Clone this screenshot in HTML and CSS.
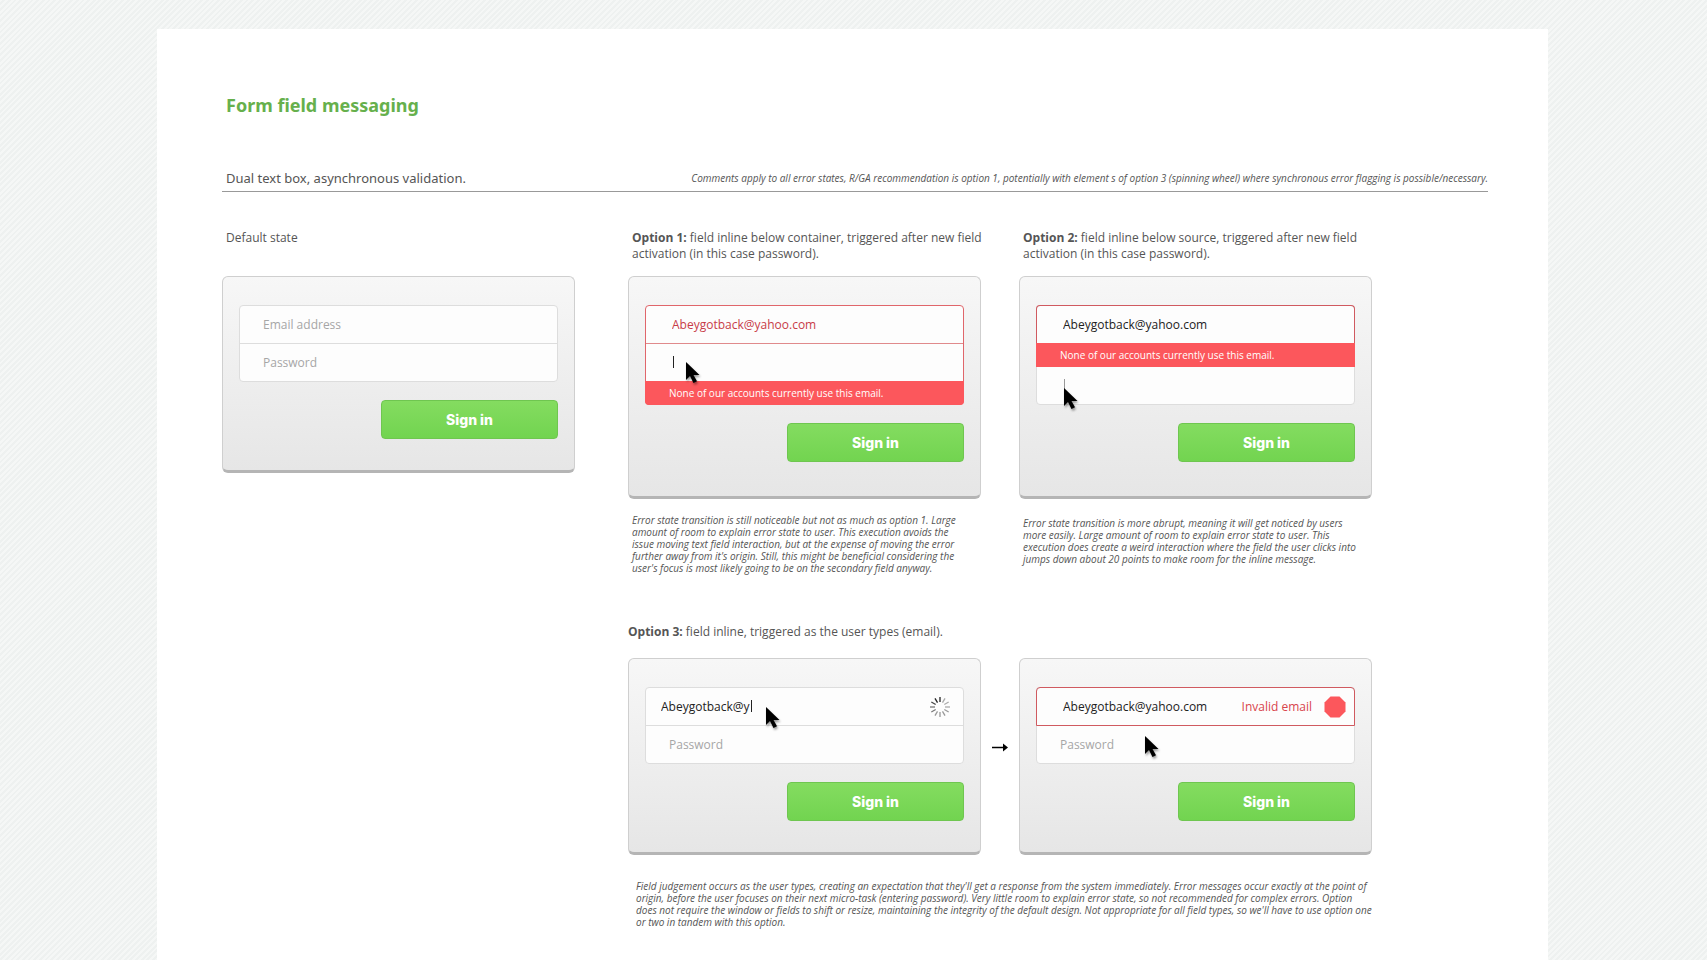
FILE: index.html
```html
<!DOCTYPE html>
<html lang="en">
<head>
<meta charset="utf-8">
<title>Form field messaging</title>
<link rel="stylesheet" href="styles.css">
</head>
<body>
<svg class="defs" aria-hidden="true">
  <symbol id="pointer" viewBox="0 0 18 24">
    <path d="M1 1v18l4-4 3.500 7 3.500-1.700-3.500-6.300h6z" fill="#000"/>
  </symbol>
</svg>
<main class="sheet">
  <h1 class="title">Form field messaging</h1>
  <header class="intro">
    <h2 class="subtitle">Dual text box, asynchronous validation.</h2>
    <p class="comment">Comments apply to all error states, R/GA recommendation is option 1, potentially with element s of option 3 (spinning wheel) where synchronous error flagging is possible/necessary.</p>
  </header>

  <div class="board">
    <p class="caption col-a">Default state</p>
    <p class="caption col-b"><strong>Option 1:</strong> field inline below container, triggered after new field<br>activation (in this case password).</p>
    <p class="caption col-c"><strong>Option 2:</strong> field inline below source, triggered after new field<br>activation (in this case password).</p>

    <form class="card col-a">
      <div class="fields">
        <div class="row"><input type="email" aria-label="Email address" placeholder="Email address"></div>
        <div class="row"><input type="password" aria-label="Password" placeholder="Password"></div>
      </div>
      <button class="submit" type="button">Sign in</button>
    </form>

    <form class="card card-tall col-b">
      <div class="fields fields-error">
        <div class="row row-entered"><input class="text-error" type="email" aria-label="Email address" value="Abeygotback@yahoo.com"></div>
        <div class="row"><input type="password" aria-label="Password"><span class="caret"></span></div>
        <p class="message">None of our accounts currently use this email.</p>
      </div>
      <button class="submit" type="button">Sign in</button>
      <svg class="pointer pointer-one" aria-hidden="true"><use href="#pointer"/></svg>
    </form>

    <form class="card card-tall col-c">
      <div class="fields">
        <div class="row row-entered row-invalid"><input type="email" aria-label="Email address" value="Abeygotback@yahoo.com"></div>
        <p class="message message-inline">None of our accounts currently use this email.</p>
        <div class="row"><input type="password" aria-label="Password"><span class="caret caret-faint"></span></div>
      </div>
      <button class="submit" type="button">Sign in</button>
      <svg class="pointer pointer-two" aria-hidden="true"><use href="#pointer"/></svg>
    </form>

    <p class="note col-b">Error state transition is still noticeable but not as much as option 1. Large<br>amount of room to explain error state to user. This execution avoids the<br>issue moving text field interaction, but at the expense of moving the error<br>further away from it's origin. Still, this might be beneficial considering the<br>user's focus is most likely going to be on the secondary field anyway.</p>
    <p class="note note-lower col-c">Error state transition is more abrupt, meaning it will get noticed by users<br>more easily. Large amount of room to explain error state to user. This<br>execution does create a weird interaction where the field the user clicks into<br>jumps down about 20 points to make room for the inline message.</p>

    <p class="caption caption-wide"><strong>Option 3:</strong> field inline, triggered as the user types (email).</p>

    <form class="card col-b">
      <div class="fields">
        <div class="row row-typing">
          <input type="email" aria-label="Email address" value="Abeygotback@y"><span class="caret caret-typing"></span>
          <svg class="spinner" viewBox="-10 -10 20 20" role="img" aria-label="Checking" stroke-width="1.300">
            <g stroke="#222"><path d="M0-5v-5"/><path d="M0-5v-5" transform="rotate(-30)"/></g>
            <g stroke="#444"><path d="M0-5v-5" transform="rotate(-60)"/></g>
            <g stroke="#777"><path d="M0-5v-5" transform="rotate(-90)"/><path d="M0-5v-5" transform="rotate(-120)"/></g>
            <g stroke="#999"><path d="M0-5v-5" transform="rotate(-150)"/><path d="M0-5v-5" transform="rotate(180)"/><path d="M0-5v-5" transform="rotate(150)"/><path d="M0-5v-5" transform="rotate(120)"/></g>
            <g stroke="#aaa"><path d="M0-5v-5" transform="rotate(90)"/><path d="M0-5v-5" transform="rotate(60)"/><path d="M0-5v-5" transform="rotate(30)"/></g>
          </svg>
        </div>
        <div class="row"><input type="password" aria-label="Password" placeholder="Password"></div>
      </div>
      <button class="submit" type="button">Sign in</button>
      <svg class="pointer pointer-three" aria-hidden="true"><use href="#pointer"/></svg>
    </form>

    <svg class="arrow" viewBox="0 0 16 9" role="img" aria-label="then"><path d="M0 4.500h12" stroke="#000" stroke-width="1.500"/><path d="M11 0.500l5 4-5 4z"/></svg>

    <form class="card col-c">
      <div class="fields">
        <div class="row row-entered row-outlined">
          <input type="email" aria-label="Email address" value="Abeygotback@yahoo.com">
          <span class="flag">Invalid email</span>
          <svg class="stop" viewBox="0 0 22 22" aria-hidden="true"><path d="M6.500 0.500h9l6 6v9l-6 6h-9l-6-6v-9z" fill="#fc575c"/></svg>
        </div>
        <div class="row"><input type="password" aria-label="Password" placeholder="Password"></div>
      </div>
      <button class="submit" type="button">Sign in</button>
      <svg class="pointer pointer-four" aria-hidden="true"><use href="#pointer"/></svg>
    </form>

    <p class="note note-wide">Field judgement occurs as the user types, creating an expectation that they'll get a response from the system immediately. Error messages occur exactly at the point of<br>origin, before the user focuses on their next micro-task (entering password). Very little room to explain error state, so not recommended for complex errors. Option<br>does not require the window or fields to shift or resize, maintaining the integrity of the default design. Not appropriate for all field types, so we'll have to use option one<br>or two in tandem with this option.</p>
  </div>
</main>
</body>
</html>
```

FILE: styles.css
```css
* { box-sizing: border-box; }

body {
  margin: 0;
  min-height: 100vh;
  display: flex;
  padding: 29px 159px 0 157px;
  font-family: "Open Sans", "Noto Sans", sans-serif;
  font-size: 12px;
  color: #555;
  background: #f1f4f3 repeating-linear-gradient(135deg, #f5f7f6 0 2px, #eef1f0 2px 4px);
}

h1, h2, p { margin: 0; }

.defs { position: absolute; width: 0; height: 0; }

.sheet {
  flex: 1;
  min-width: 0;
  padding: 63px 60px 31px 65px;
  background: #fff;
}

.title {
  padding-left: 4px;
  font-family: "Noto Sans", sans-serif;
  font-size: 18px;
  line-height: 26px;
  color: #66b04c;
}

.intro {
  display: flex;
  align-items: center;
  justify-content: space-between;
  margin-top: 47px;
  padding-left: 4px;
  height: 27px;
  border-bottom: 1px solid #999;
  white-space: nowrap;
}

.subtitle {
  font-family: "Noto Sans", sans-serif;
  font-size: 13px;
  font-weight: 400;
  line-height: 20px;
}

.comment {
  font-size: 10px;
  font-style: italic;
  line-height: 12px;
}

.board {
  display: grid;
  grid-template-columns: minmax(0, 353fr) minmax(0, 53fr) minmax(0, 353fr) minmax(0, 38fr) minmax(0, 353fr) minmax(0, 116fr);
  margin-top: 38px;
  align-items: start;
}

.col-a { grid-column: 1; }
.col-b { grid-column: 3; }
.col-c { grid-column: 5; }

.caption {
  padding-left: 4px;
  margin-bottom: 14px;
  line-height: 16px;
  white-space: nowrap;
}

.caption-wide {
  grid-column: 3 / 6;
  margin: 50px 0 18px;
  padding-left: 0;
}

.card {
  position: relative;
  display: flex;
  flex-direction: column;
  padding: 28px 16px 31px;
  border: 1px solid #cfcfcf;
  border-bottom: 3px solid #b5b5b5;
  border-radius: 6px;
  background: linear-gradient(#f7f7f7, #e6e6e6);
}

.card-tall { padding-bottom: 34px; }

.fields {
  border: 1px solid #ddd;
  border-radius: 4px;
  background: #fdfdfd;
}

.row {
  position: relative;
  display: flex;
  align-items: center;
  height: 37px;
  padding: 0 8px 0 23px;
}

.row + .row { border-top: 1px solid #ddd; height: 38px; }
.row-entered { padding-left: 26px; }
.row-typing { padding: 0 13px 0 15px; }

input {
  flex: 1;
  min-width: 0;
  padding: 0;
  border: 0;
  outline: 0;
  background: none;
  font: inherit;
  line-height: 18px;
  color: #222;
}

input::placeholder { color: #a6a6a6; opacity: 1; }

.text-error { color: #c83c48; }

.fields-error { border-color: #e0666b; }
.fields-error .row + .row { border-color: #e08a8c; }

.message {
  margin: 0 -1px -1px;
  padding-left: 24px;
  border-radius: 0 0 4px 4px;
  background: #fc575c;
  font-size: 10px;
  font-weight: 500;
  line-height: 24px;
  color: #fff;
}

.message-inline {
  margin-bottom: 0;
  border-radius: 0;
}

.row-invalid, .row-outlined {
  margin: -1px -1px 0;
  padding-left: 26px;
  border: 1px solid #d05a60;
  border-radius: 4px 4px 0 0;
  height: 38px;
}

.row-invalid { border-bottom: 0; }
.row-outlined { height: 39px; }
.row-outlined + .row { border-top: 0; height: 37px; }

.flag { margin-right: 12px; color: #d8444c; }
.stop { width: 22px; height: 22px; }
.spinner { width: 20px; height: 20px; }

.caret {
  position: absolute;
  left: 27px;
  top: 12px;
  width: 1px;
  height: 12px;
  background: #222;
}

.caret-faint { background: #999; }
.caret-typing { left: 105px; }

.submit {
  align-self: flex-end;
  width: 177px;
  height: 39px;
  margin-top: 18px;
  border: 1px solid #6fc650;
  border-radius: 4px;
  background: linear-gradient(#84dc60, #72d450);
  font-family: Inter, sans-serif;
  font-size: 14px;
  font-weight: 800;
  color: #fff;
}

.pointer {
  position: absolute;
  width: 18px;
  height: 24px;
  filter: drop-shadow(1px 2px 1px rgba(0, 0, 0, 0.4));
}

.pointer-one { left: 56px; top: 84px; }
.pointer-two { left: 43px; top: 110px; }
.pointer-three { left: 136px; top: 47px; }
.pointer-four { left: 124px; top: 76px; }

.arrow {
  grid-column: 4;
  justify-self: center;
  margin-top: 85px;
  width: 16px;
  height: 9px;
}

.note {
  margin-top: 15px;
  padding-left: 4px;
  font-size: 10px;
  font-style: italic;
  line-height: 12px;
  white-space: nowrap;
}

.note-lower { margin-top: 18px; }

.note-wide {
  grid-column: 3 / 7;
  margin-top: 25px;
  padding-left: 8px;
}
```
